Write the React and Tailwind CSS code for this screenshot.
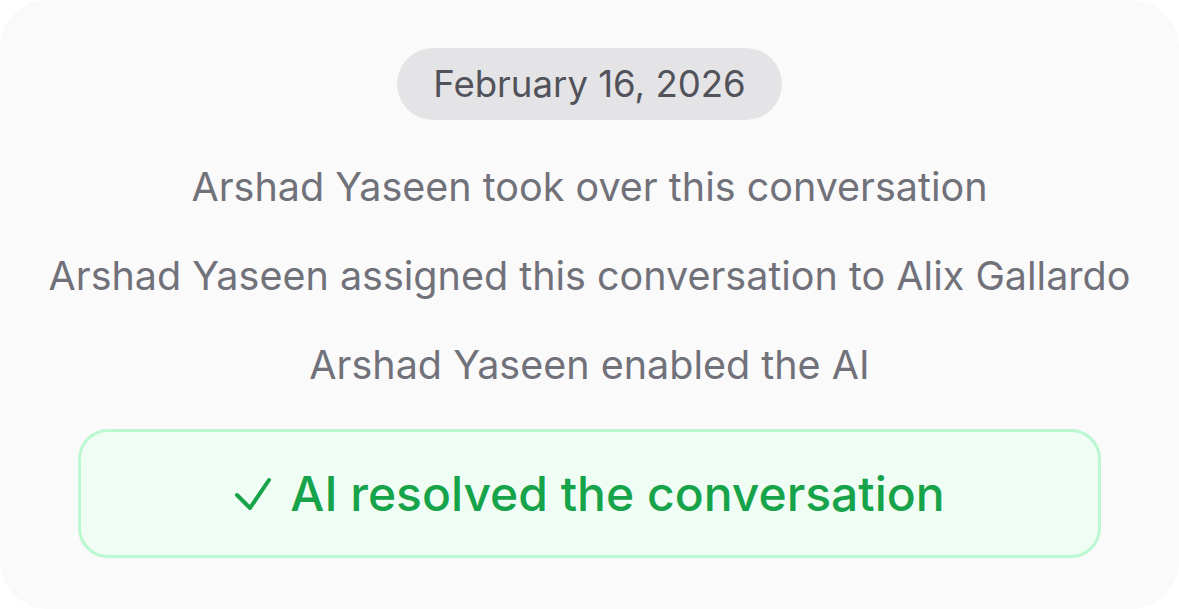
import React from 'react';

const events = [
  'Arshad Yaseen took over this conversation',
  'Arshad Yaseen assigned this conversation to Alix Gallardo',
  'Arshad Yaseen enabled the AI',
];

const App = () => {
  return (
    <div className="min-h-screen bg-white" style={{ fontFamily: 'Inter, "Noto Sans", sans-serif' }}>
      <div className="h-[609px] w-full rounded-[48px] bg-[#fafafa] flex flex-col items-center pt-[48px]">
        <div className="h-[72px] px-[36px] rounded-full bg-[#e4e4e7] flex items-center text-[#52525b] text-[36.6px] leading-none">
          February 16, 2026
        </div>
        <div className="mt-[41px] flex flex-col items-center gap-[37px]">
          {events.map((t) => (
            <p key={t} className="text-[39.5px] leading-[52px] text-[#71717a]">
              {t}
            </p>
          ))}
        </div>
        <div className="mt-[38px] w-[1023px] h-[129px] rounded-[30px] border-[3px] border-[#bbf7d0] bg-[#f0fdf4] flex items-center justify-center gap-[18px] text-[#16a34a]">
          <svg width="38" height="34" viewBox="0 0 38 34" fill="none" stroke="currentColor" strokeWidth="4" strokeLinecap="round" strokeLinejoin="round">
            <path d="M3 18L16 31L35 3" />
          </svg>
          <span className="text-[48px] leading-none font-medium">AI resolved the conversation</span>
        </div>
      </div>
    </div>
  );
};

export default App;
